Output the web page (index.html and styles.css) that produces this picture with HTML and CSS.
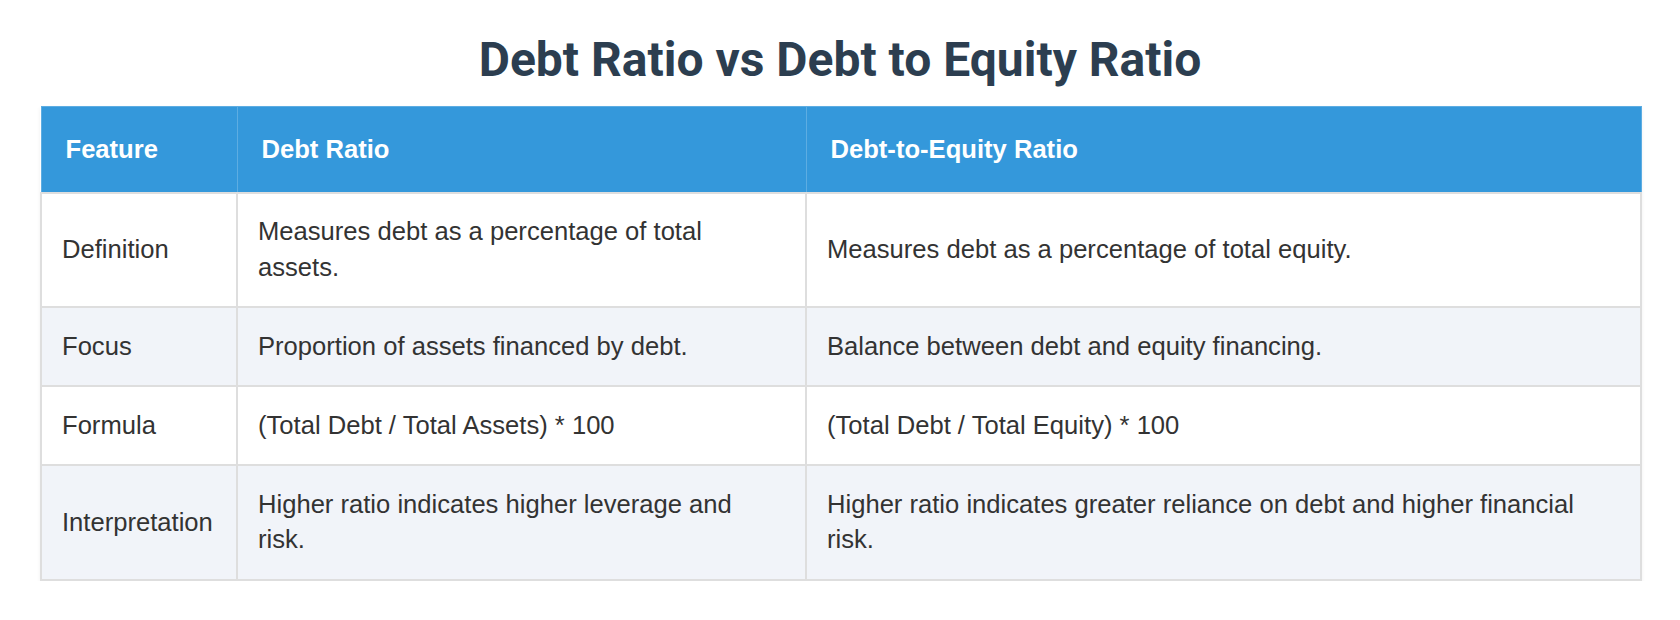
FILE: index.html
```html
<!DOCTYPE html>
<html lang="en">
<head>
<meta charset="utf-8">
<title>Debt Ratio vs Debt to Equity Ratio</title>
<link rel="stylesheet" href="styles.css">
</head>
<body>
<main class="page">
  <h1 class="title">Debt Ratio vs Debt to Equity Ratio</h1>
  <table class="compare">
    <colgroup>
      <col class="col-feature">
      <col class="col-debt">
      <col class="col-dte">
    </colgroup>
    <thead>
      <tr>
        <th>Feature</th>
        <th>Debt Ratio</th>
        <th>Debt-to-Equity Ratio</th>
      </tr>
    </thead>
    <tbody>
      <tr>
        <td>Definition</td>
        <td>Measures debt as a percentage of total assets.</td>
        <td>Measures debt as a percentage of total equity.</td>
      </tr>
      <tr>
        <td>Focus</td>
        <td>Proportion of assets financed by debt.</td>
        <td>Balance between debt and equity financing.</td>
      </tr>
      <tr>
        <td>Formula</td>
        <td>(Total Debt / Total Assets) * 100</td>
        <td>(Total Debt / Total Equity) * 100</td>
      </tr>
      <tr>
        <td>Interpretation</td>
        <td>Higher ratio indicates higher leverage and risk.</td>
        <td>Higher ratio indicates greater reliance on debt and higher financial risk.</td>
      </tr>
    </tbody>
  </table>
</main>
</body>
</html>
```

FILE: styles.css
```css
html, body {
  margin: 0;
  padding: 0;
  background: #ffffff;
}

body {
  font-family: "Liberation Sans", Arial, sans-serif;
  color: #333333;
}

.page {
  padding: 33px 40px 0 40px;
}

.title {
  margin: 0 0 19px 0;
  font-family: Roboto, "Liberation Sans", sans-serif;
  font-weight: 700;
  font-size: 48px;
  line-height: 54px;
  color: #2c3e50;
  text-align: center;
}

.compare {
  width: 1600px;
  border-collapse: collapse;
  table-layout: fixed;
  font-size: 25.6px;
  line-height: 1.4;
  box-shadow: 0 2px 4px rgba(0, 0, 0, 0.06);
}

.col-feature { width: 196px; }
.col-debt { width: 569px; }
.col-dte { width: 835px; }

.compare th {
  background: #3498db;
  color: #ffffff;
  font-weight: 700;
  text-align: left;
  padding: 24.5px 24px;
  border: 1px solid #5dade2;
}

.compare td {
  padding: 20.5px 20px;
  border: 2px solid #dedede;
  vertical-align: middle;
}

.compare tbody tr:nth-child(even) td {
  background: #f1f4f9;
}
```
